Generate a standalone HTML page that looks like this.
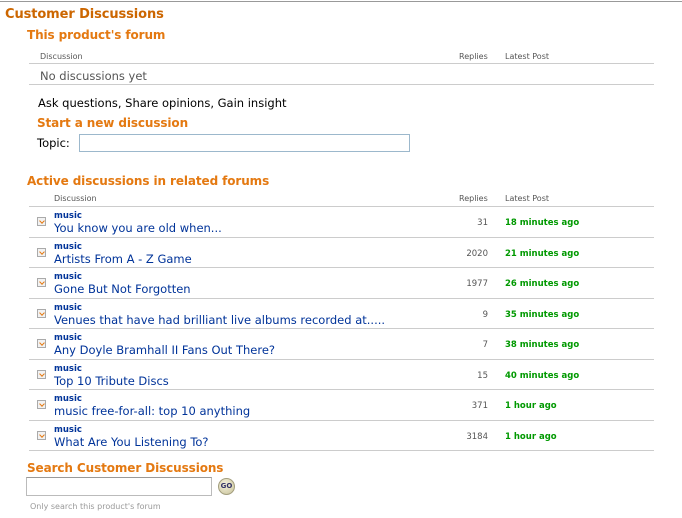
<!DOCTYPE html>
<html><head><meta charset="utf-8"><style>
*{margin:0;padding:0;box-sizing:border-box}
body{width:682px;height:518px;background:#fff;font-family:"DejaVu Sans","Liberation Sans",sans-serif;position:relative;overflow:hidden;color:#000}
.a{position:absolute;white-space:nowrap;margin-top:2px}
.h1{font-size:13px;font-weight:bold;color:#cc6600;letter-spacing:-0.1px}
.h2{font-size:12px;font-weight:bold;color:#e47911;letter-spacing:-0.1px}
.sm{font-size:8px;color:#555}
.ln{position:absolute;left:29px;width:625px;height:1px;background:#ccc}
.mu{font-size:8.5px;font-weight:bold;color:#003399}
.t{font-size:11.5px;color:#003399}
.r{font-size:8.5px;color:#555;text-align:right;width:60px}
.g{font-size:8.5px;font-weight:bold;color:#009900}
.ic{position:absolute;left:37px;width:9px;height:9px;border:1px solid #aaa;background:#f2f2f2}
.ic:after{content:"";position:absolute;left:2px;top:1px;width:3px;height:3px;border-right:1px solid #e47911;border-bottom:1px solid #e47911;transform:rotate(45deg)}
</style></head><body>
<div style="position:absolute;left:0;top:1px;width:682px;height:1px;background:#999"></div>
<div class="a h1" style="left:5px;top:5px">Customer Discussions</div>
<div class="a h2" style="left:27px;top:26px">This product's forum</div>
<div class="a sm" style="left:40px;top:50px">Discussion</div>
<div class="a sm" style="left:459px;top:50px">Replies</div>
<div class="a sm" style="left:505px;top:50px">Latest Post</div>
<div class="ln" style="top:63px"></div>
<div class="a" style="left:40px;top:67px;font-size:11.5px;color:#555">No discussions yet</div>
<div class="ln" style="top:84px"></div>
<div class="a" style="left:38px;top:94px;font-size:11.5px">Ask questions, Share opinions, Gain insight</div>
<div class="a h2" style="left:37px;top:114px">Start a new discussion</div>
<div class="a" style="left:37px;top:134px;font-size:11.5px">Topic:</div>
<div style="position:absolute;left:79px;top:134px;width:331px;height:18px;border:1px solid #9cb8cc"></div>
<div class="a h2" style="left:27px;top:172px">Active discussions in related forums</div>
<div class="a sm" style="left:54px;top:192px">Discussion</div>
<div class="a sm" style="left:459px;top:192px">Replies</div>
<div class="a sm" style="left:505px;top:192px">Latest Post</div>
<div class="ln" style="top:206px"></div>

<div class="ic" style="top:217px"></div><div class="a mu" style="left:54px;top:209px">music</div><div class="a t" style="left:54px;top:219px">You know you are old when...</div><div class="a r" style="left:428px;top:216px">31</div><div class="a g" style="left:505px;top:216px">18 minutes ago</div><div class="ln" style="top:237px"></div>
<div class="ic" style="top:248px"></div><div class="a mu" style="left:54px;top:240px">music</div><div class="a t" style="left:54px;top:250px">Artists From A - Z Game</div><div class="a r" style="left:428px;top:247px">2020</div><div class="a g" style="left:505px;top:247px">21 minutes ago</div><div class="ln" style="top:267px"></div>
<div class="ic" style="top:278px"></div><div class="a mu" style="left:54px;top:270px">music</div><div class="a t" style="left:54px;top:280px">Gone But Not Forgotten</div><div class="a r" style="left:428px;top:277px">1977</div><div class="a g" style="left:505px;top:277px">26 minutes ago</div><div class="ln" style="top:298px"></div>
<div class="ic" style="top:309px"></div><div class="a mu" style="left:54px;top:301px">music</div><div class="a t" style="left:54px;top:311px">Venues that have had brilliant live albums recorded at.....</div><div class="a r" style="left:428px;top:308px">9</div><div class="a g" style="left:505px;top:308px">35 minutes ago</div><div class="ln" style="top:328px"></div>
<div class="ic" style="top:339px"></div><div class="a mu" style="left:54px;top:331px">music</div><div class="a t" style="left:54px;top:341px">Any Doyle Bramhall II Fans Out There?</div><div class="a r" style="left:428px;top:338px">7</div><div class="a g" style="left:505px;top:338px">38 minutes ago</div><div class="ln" style="top:359px"></div>
<div class="ic" style="top:370px"></div><div class="a mu" style="left:54px;top:362px">music</div><div class="a t" style="left:54px;top:372px">Top 10 Tribute Discs</div><div class="a r" style="left:428px;top:369px">15</div><div class="a g" style="left:505px;top:369px">40 minutes ago</div><div class="ln" style="top:389px"></div>
<div class="ic" style="top:400px"></div><div class="a mu" style="left:54px;top:392px">music</div><div class="a t" style="left:54px;top:402px">music free-for-all: top 10 anything</div><div class="a r" style="left:428px;top:399px">371</div><div class="a g" style="left:505px;top:399px">1 hour ago</div><div class="ln" style="top:420px"></div>
<div class="ic" style="top:431px"></div><div class="a mu" style="left:54px;top:423px">music</div><div class="a t" style="left:54px;top:433px">What Are You Listening To?</div><div class="a r" style="left:428px;top:430px">3184</div><div class="a g" style="left:505px;top:430px">1 hour ago</div><div class="ln" style="top:450px"></div>

<div class="a h2" style="left:27px;top:459px">Search Customer Discussions</div>
<div style="position:absolute;left:26px;top:477px;width:186px;height:19px;border:1px solid #bbb;border-top-color:#999"></div>
<div style="position:absolute;left:218px;top:478px;width:17px;height:17px;border-radius:50%;background:radial-gradient(circle at 40% 35%,#f4f1dc,#c9c39a);border:1px solid #a39e7e;font-size:7px;font-weight:bold;color:#333366;text-align:center;line-height:15px">GO</div>
<div class="a" style="left:30px;top:500px;font-size:8px;color:#999">Only search this product's forum</div>
</body></html>
